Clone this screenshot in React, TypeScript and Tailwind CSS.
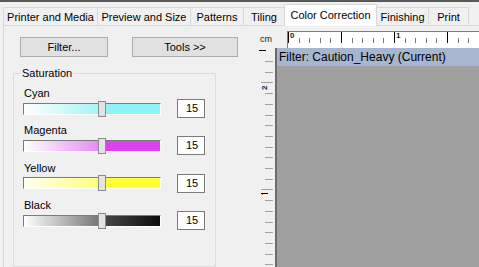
import React from "react"

const tabs = [
  { label: "Printer and Media", cls: "w-[94px] border-l" },
  { label: "Preview and Size", cls: "w-[93px] border-l" },
  { label: "Patterns", cls: "w-[53px] border-l" },
  { label: "Tiling", cls: "w-[41px] border-l" },
  { label: "Color Correction", cls: "w-[93px] border-x", active: true },
  { label: "Finishing", cls: "w-[51px]" },
  { label: "Print", cls: "w-[41px] border-x" },
]

const sliders = [
  {
    name: "Cyan",
    left: "bg-[linear-gradient(to_right,#ffffff,#a6f4f6)]",
    right: "bg-[#8ef3f6]",
  },
  {
    name: "Magenta",
    left: "bg-[linear-gradient(to_right,#ffffff,#e38ff0)]",
    right: "bg-[#dc42ee]",
  },
  {
    name: "Yellow",
    left: "bg-[linear-gradient(to_right,#fffff0,#ffff80)]",
    right: "bg-[#ffff33]",
  },
  {
    name: "Black",
    left: "bg-[linear-gradient(to_right,#ffffff,#787878)]",
    right: "bg-[linear-gradient(to_right,#444444,#0c0c0c)]",
  },
]

function HRuler() {
  const ticks = Array.from({ length: 19 }, (_, k) => k)
  return (
    <svg width="191" height="16" className="block">
      {ticks.map((k) => {
        const x = Math.round(k * 10.6) + 0.5
        const major = k % 5 === 0
        return (
          <line
            key={k}
            x1={x}
            x2={x}
            y1={major ? 0 : 6}
            y2={11}
            stroke={major ? "#000" : "#7a7a7a"}
            strokeWidth="1"
          />
        )
      })}
      <text x="2" y="6" fontSize="8" fontWeight="bold" fontFamily="Liberation Sans, Arial, sans-serif" fill="#1a1a1a">
        0
      </text>
      <text x="108" y="6" fontSize="8" fontWeight="bold" fontFamily="Liberation Sans, Arial, sans-serif" fill="#1a1a1a">
        1
      </text>
    </svg>
  )
}

function VRuler() {
  const ticks = Array.from({ length: 20 }, (_, k) => k)
  return (
    <svg width="20" height="219" className="block">
      <line x1="4" x2="11" y1="2.5" y2="2.5" stroke="#000" />
      {ticks.map((k) => {
        const y = Math.round(13 + k * 10.7) + 0.5
        const long = k === 2 || k === 12
        return <line key={k} x1={long ? 6 : 10} x2="18" y1={y} y2={y} stroke="#a0a0a0" />
      })}
      <line x1="6" x2="13" y1="145.5" y2="145.5" stroke="#000" />
      <rect x="7" y="146" width="1" height="1" fill="#c86400" />
      <text
        transform="translate(12,42) rotate(-90)"
        fontSize="8"
        fontWeight="bold"
        fontFamily="Liberation Sans, Arial, sans-serif"
        fill="#202048"
      >
        2
      </text>
    </svg>
  )
}

export default function App() {
  return (
    <div className="h-[267px] w-[479px] overflow-hidden bg-[#f0f0f0] font-['Liberation_Sans',Arial,sans-serif] text-[11px] text-black">
      <div className="h-[2px] bg-[#5a5a5a]" />

      {/* Tabs */}
      <div className="flex h-[23px] items-end pl-[3px]">
        {tabs.map((t) =>
          t.active ? (
            <div
              key={t.label}
              className={`relative z-10 -mb-px h-[22px] shrink-0 border-t border-[#d9d9d9] bg-white pt-[4px] text-center leading-[13px] ${t.cls}`}
            >
              {t.label}
            </div>
          ) : (
            <div
              key={t.label}
              className={`h-[18px] shrink-0 border-t border-[#d9d9d9] bg-[#f0f0f0] pt-[3px] text-center leading-[13px] ${t.cls}`}
            >
              {t.label}
            </div>
          )
        )}
      </div>

      {/* Panel */}
      <div className="ml-[3px] flex h-[242px] border-l border-t border-[#d9d9d9]">
        {/* Left controls */}
        <div className="w-[251px] shrink-0">
          <div className="ml-[16px] mt-[11px] flex gap-[24px]">
            <div className="flex h-[20px] w-[88px] items-center justify-center border border-[#adadad] bg-[#e1e1e1]">
              Filter...
            </div>
            <div className="flex h-[20px] w-[106px] items-center justify-center border border-[#adadad] bg-[#e1e1e1]">
              Tools &gt;&gt;
            </div>
          </div>

          <fieldset className="ml-[9px] mt-[10px] h-[200px] w-[203px] border border-[#dcdcdc] pl-[9px] pt-[8px]">
            <legend className="-ml-[2px] px-[1px] leading-[13px]">Saturation</legend>
            <div className="flex flex-col gap-[7.4px]">
              {sliders.map((s) => (
                <div key={s.name}>
                  <div className="pl-[1px] leading-[11px]">{s.name}</div>
                  <div className="flex h-[19px] items-center">
                    <div className="flex h-[12px] w-[138px] items-center border border-[#7a7a7a] border-b-white border-r-white">
                      <div className={`h-full w-[74px] ${s.left}`} />
                      <div className="h-[16px] w-[8px] shrink-0 border border-[#8c8c8c] bg-[#e3e3e3]" />
                      <div className={`h-full flex-1 ${s.right}`} />
                    </div>
                    <div className="ml-[16px] flex h-[19px] w-[28px] items-center justify-center border border-[#7a7a7a] bg-white pl-[2px] leading-[13px]">
                      15
                    </div>
                  </div>
                </div>
              ))}
            </div>
          </fieldset>
        </div>

        {/* Preview */}
        <div className="flex flex-1 flex-col pt-[5px]">
          <div className="flex h-[17px]">
            <div className="flex w-[32px] shrink-0 items-center pl-[5px] text-[9px] text-[#222]">cm</div>
            <div className="flex-1 overflow-hidden border-l border-t border-[#7d7d7d] bg-white">
              <HRuler />
            </div>
          </div>
          <div className="flex flex-1">
            <div className="w-[20px] shrink-0 overflow-hidden">
              <VRuler />
            </div>
            <div className="w-[2px] shrink-0 bg-[#6b6b6b]" />
            <div className="flex-1 bg-[#a0a0a0]">
              <div className="h-[18px] bg-[#a6b5d0] pl-[2px] text-[12px] leading-[18px]">
                Filter: Caution_Heavy (Current)
              </div>
            </div>
          </div>
        </div>
      </div>
    </div>
  )
}
